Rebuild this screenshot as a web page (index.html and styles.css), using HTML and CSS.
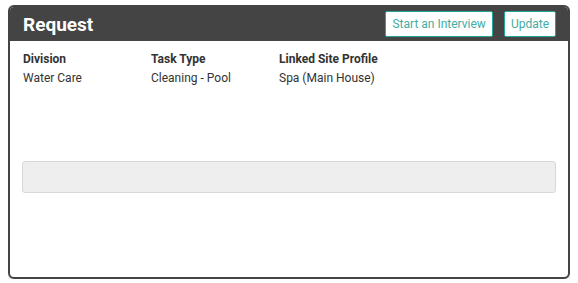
FILE: index.html
```html
<!DOCTYPE html>
<html lang="en">

<head>
    <meta charset="UTF-8">
    <meta name="viewport" content="width=device-width, initial-scale=1.0">
    <title>Request</title>
    <link rel="stylesheet" href="styles.css">
</head>

<body>

    <div class="panel">
        <div class="panel-header">
            <h2>Request</h2>
            <div class="actions">
                <button type="button">Start an Interview</button>
                <button type="button">Update</button>
            </div>
        </div>

        <div class="panel-body">
            <div class="details">
                <div class="field">
                    <div class="field-label">Division</div>
                    <div class="field-value">Water Care</div>
                </div>
                <div class="field">
                    <div class="field-label">Task Type</div>
                    <div class="field-value">Cleaning - Pool</div>
                </div>
                <div class="field">
                    <div class="field-label">Linked Site Profile</div>
                    <div class="field-value">Spa (Main House)</div>
                </div>
            </div>

            <div class="notes"></div>
        </div>
    </div>

</body>

</html>
```

FILE: styles.css
```css
body {
    font-family: Roboto, 'Liberation Sans', sans-serif;
    margin: 5px 8px;
    background: white;
    color: #333;
}

.panel {
    box-sizing: border-box;
    width: 562px;
    height: 274px;
    border: 2px solid #444;
    border-radius: 6px;
    background: white;
    box-shadow: 0 1px 4px rgba(0, 0, 0, 0.2);
    overflow: hidden;
}

.panel-header {
    display: flex;
    justify-content: space-between;
    align-items: center;
    height: 34px;
    padding: 0 12px 0 13px;
    background: #444;
}

.panel-header h2 {
    margin: 0;
    font-size: 19px;
    font-weight: bold;
    color: white;
}

.actions {
    display: flex;
    gap: 11px;
}

.actions button {
    height: 26px;
    padding: 0 6px;
    background: white;
    color: #45aca2;
    border: 1px solid #26a69a;
    border-radius: 2px;
    font-family: inherit;
    font-size: 12px;
    cursor: pointer;
}

.panel-body {
    padding: 10px 12px 0 12px;
}

.details {
    display: flex;
    padding-left: 1px;
    font-size: 12px;
    line-height: 16px;
}

.field {
    width: 128px;
}

.field-label {
    font-weight: bold;
    margin-bottom: 3px;
}

.notes {
    height: 30px;
    margin-top: 75px;
    background: #eee;
    border: 1px solid #d8d8d8;
    border-radius: 3px;
}
```
